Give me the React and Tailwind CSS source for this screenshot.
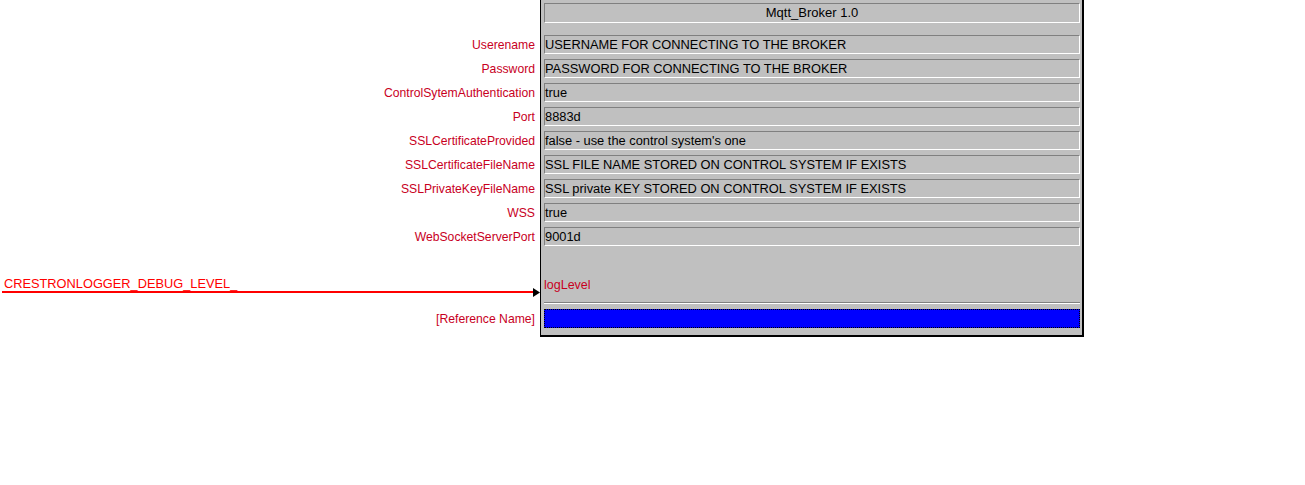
export default function App() {
  const rows = [
    ["Userename", "USERNAME FOR CONNECTING TO THE BROKER"],
    ["Password", "PASSWORD FOR CONNECTING TO THE BROKER"],
    ["ControlSytemAuthentication", "true"],
    ["Port", "8883d"],
    ["SSLCertificateProvided", "false - use the control system's one"],
    ["SSLCertificateFileName", "SSL FILE NAME STORED ON CONTROL SYSTEM IF EXISTS"],
    ["SSLPrivateKeyFileName", "SSL private KEY STORED ON CONTROL SYSTEM IF EXISTS"],
    ["WSS", "true"],
    ["WebSocketServerPort", "9001d"],
  ];
  const font = { fontFamily: '"Liberation Sans", Arial, sans-serif' };
  return (
    <div className="w-[1305px] h-[485px] bg-white flex items-start overflow-hidden" style={font}>
      {/* left labels column */}
      <div className="w-[540px] flex flex-col shrink-0">
        <div className="h-[36px]" />
        {rows.map(([label], i) => (
          <div
            key={label}
            className={`h-[19px] leading-[19px] text-right pr-[5px] text-[12.2px] text-[#c8001e] ${i > 0 ? "mt-[5px]" : ""}`}
          >
            {label}
          </div>
        ))}
        <div className="mt-[29px] flex flex-col">
          <div className="h-[15px] leading-[15px] pl-[4px] text-[12.8px] text-[#ff0000]">
            CRESTRONLOGGER_DEBUG_LEVEL_
          </div>
          <div className="flex items-center h-[2px] pl-[2px]">
            <div className="flex-1 h-[2px] bg-[#ff0000]" />
            <svg width="7" height="9" viewBox="0 0 7 9" className="shrink-0 -ml-[1px]">
              <polygon points="0,0 7,4.5 0,9" fill="#000" />
            </svg>
          </div>
        </div>
        <div className="mt-[17px] h-[18px] leading-[18px] text-right pr-[5px] text-[12.2px] text-[#c8001e]">
          [Reference Name]
        </div>
      </div>

      {/* panel */}
      <div className="w-[544px] shrink-0 bg-[#c0c0c0] border-l border-l-black border-r-2 border-r-black border-b-2 border-b-black pl-[3px] pr-[2px] pt-[3px] pb-[7px] flex flex-col">
        <div className="h-[20px] border border-t-[#808080] border-l-[#808080] border-b-white border-r-white flex items-center justify-center text-[13px] text-black">
          Mqtt_Broker 1.0
        </div>
        <div className="mt-[12px] flex flex-col gap-[5px]">
          {rows.map(([label, value]) => (
            <div
              key={label}
              className="h-[19px] border border-t-[#808080] border-l-[#808080] border-b-white border-r-white flex items-center text-[12.85px] text-black whitespace-nowrap"
            >
              {value}
            </div>
          ))}
        </div>
        <div className="mt-[31px] h-[16px] leading-[16px] text-[12.5px] text-[#c8001e]">logLevel</div>
        <div className="mt-[9px] h-[1px] bg-[#808080]" />
        <div className="h-[1px] bg-white" />
        <div className="mt-[5px] h-[19px] bg-[#0000ff] border border-dotted border-black" />
      </div>
    </div>
  );
}
